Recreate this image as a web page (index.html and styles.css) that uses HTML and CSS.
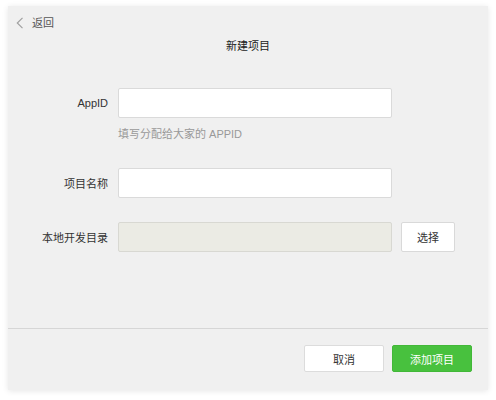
FILE: index.html
```html
<!DOCTYPE html>
<html lang="zh-CN">
<head>
<meta charset="utf-8">
<title>新建项目</title>
<link rel="stylesheet" href="styles.css">
</head>
<body>
<div class="panel">
  <div class="header">
    <a class="back">
      <svg class="chev" width="8" height="12" viewBox="0 0 8 12"><path d="M6.5 0.8 L1.3 6 L6.5 11.2" fill="none" stroke="#a0a0a0" stroke-width="1.2"/></svg>
      <span>返回</span>
    </a>
  </div>
  <div class="title">新建项目</div>
  <div class="form">
    <div class="row">
      <label class="label">AppID</label>
      <div class="input"></div>
    </div>
    <div class="hint">填写分配给大家的 APPID</div>
    <div class="row row-name">
      <label class="label">项目名称</label>
      <div class="input"></div>
    </div>
    <div class="row row-dir">
      <label class="label">本地开发目录</label>
      <div class="input disabled"></div>
      <button class="btn btn-select">选择</button>
    </div>
  </div>
  <div class="spacer"></div>
  <div class="footer">
    <button class="btn btn-cancel">取消</button>
    <button class="btn btn-primary">添加项目</button>
  </div>
</div>
</body>
</html>
```
FILE: styles.css
```css
html, body {
  margin: 0;
  padding: 0;
  background: #ffffff;
}
body {
  padding: 6px 8px;
  font-family: "Liberation Sans", "Noto Sans CJK SC", sans-serif;
  font-size: 12px;
  color: #333;
}
.panel {
  width: 480px;
  height: 384px;
  background: #f0f0f0;
  box-shadow: 0 1px 6px rgba(0, 0, 0, 0.10);
  display: flex;
  flex-direction: column;
}
.header {
  padding: 10px 0 0 8px;
  height: 14px;
}
.back {
  display: flex;
  align-items: center;
  height: 14px;
  line-height: 14px;
  color: #555;
  font-size: 11px;
}
.chev {
  margin-right: 8px;
}
.title {
  margin-top: 9px;
  height: 14px;
  line-height: 14px;
  text-align: center;
  font-size: 11px;
  color: #222;
}
.form {
  margin-top: 35px;
}
.row {
  display: flex;
  align-items: center;
  height: 30px;
}
.label {
  width: 100px;
  text-align: right;
  font-size: 11px;
  color: #333;
}
.input {
  margin-left: 10px;
  width: 272px;
  height: 28px;
  background: #fff;
  border: 1px solid #dadada;
  border-radius: 2px;
}
.input.disabled {
  background: #ebebe4;
  border-color: #d8d8d2;
}
.hint {
  margin-top: 8px;
  padding-left: 110px;
  height: 16px;
  line-height: 16px;
  font-size: 11px;
  color: #999;
}
.row-name {
  margin-top: 26px;
}
.row-dir {
  margin-top: 24px;
}
.btn {
  box-sizing: border-box;
  font-family: inherit;
  font-size: 11px;
  border-radius: 2px;
  cursor: pointer;
}
.btn-select {
  margin-left: 9px;
  width: 54px;
  height: 30px;
  background: #fff;
  border: 1px solid #d9d9d9;
  color: #333;
}
.spacer {
  flex: 1;
  border-bottom: 1px solid #d6d6d6;
}
.footer {
  display: flex;
  justify-content: flex-end;
  gap: 8px;
  padding: 16px 16px 18px 0;
}
.btn-cancel {
  width: 80px;
  height: 27px;
  background: #fff;
  border: 1px solid #dcdcdc;
  color: #333;
}
.btn-primary {
  width: 80px;
  height: 27px;
  background: #48c13e;
  border: 1px solid #42b838;
  color: #fff;
}
```
